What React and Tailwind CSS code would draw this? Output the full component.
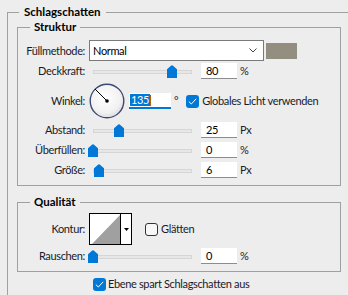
import React from "react";

function Slider({ pct }) {
  return (
    <div className="relative w-[110px] h-[20px] shrink-0 ml-[3px]">
      <div className="absolute left-[5px] top-[9px] w-[99px] h-[4px] bg-[#e7e7e7] border border-[#d6d6d6]" />
      <svg
        className="absolute top-[4px]"
        style={{ left: Math.round(pct * 99) }}
        width="10"
        height="13"
        viewBox="0 0 10 13"
      >
        <path d="M4.3 0.6 Q5 0 5.7 0.6 L10 4.2 V13 H0 V4.2 Z" fill="#0078d7" />
      </svg>
    </div>
  );
}

function Label({ children }) {
  return <div className="w-[67px] shrink-0 text-right">{children}</div>;
}

function NumInput({ value }) {
  return (
    <div className="ml-[3px] w-[36px] h-[16px] bg-white border-b border-[#8c8c8c] pl-[5px] flex items-center leading-[14px] text-black">
      {value}
    </div>
  );
}

function CheckOn() {
  return (
    <div className="w-[13px] h-[13px] rounded-[3px] bg-[#0078d7] flex items-center justify-center shrink-0">
      <svg width="9" height="7" viewBox="0 0 9 7">
        <path d="M0.8 3.6 L3.3 6 L8.2 0.8" fill="none" stroke="#ffffff" strokeWidth="1" />
      </svg>
    </div>
  );
}

function SliderRow({ label, pct, value, unit }) {
  return (
    <div className="flex items-center h-[20px]">
      <Label>{label}</Label>
      <Slider pct={pct} />
      <NumInput value={value} />
      <span className="ml-[3px]">{unit}</span>
    </div>
  );
}

export default function App() {
  return (
    <div className="w-[348px] h-[295px] overflow-hidden bg-[#ededed] pl-[7px] pt-[4px] text-[11px] leading-[16px] tracking-[-0.35px] text-[#1a1a2a] font-['Lato',sans-serif]">
      <fieldset className="border-l border-t border-[#a0a0a0] h-[400px]">
        <legend className="ml-[11px] px-[5px] font-bold text-black tracking-normal text-[11.5px]">Schlagschatten</legend>

        <fieldset className="mt-[-1px] ml-[9px] mr-[7px] border border-[#a0a0a0] pt-[5px] pb-[5px]">
          <legend className="ml-[12px] px-[4px] font-bold text-black tracking-normal text-[11.5px]">Struktur</legend>

          <div className="flex items-center h-[21px]">
            <Label>Füllmethode:</Label>
            <div className="ml-[4px] w-[175px] h-[21px] bg-white border border-[#7a7a7a] flex items-center justify-between pl-[3px] pr-[6px] text-black">
              <span>Normal</span>
              <svg width="8" height="5" viewBox="0 0 8 5">
                <path d="M0.5 0.5 L4 4 L7.5 0.5" fill="none" stroke="#444" strokeWidth="1" />
              </svg>
            </div>
            <div className="ml-[2px] w-[31px] h-[16px] bg-[#928f80]" />
          </div>

          <SliderRow label="Deckkraft:" pct={0.8} value="80" unit="%" />

          <div className="flex items-center h-[38px] mt-[1px]">
            <Label>Winkel:</Label>
            <svg className="ml-[4px] shrink-0" width="36" height="36" viewBox="0 0 36 36">
              <defs>
                <radialGradient id="dial" cx="45%" cy="40%" r="65%">
                  <stop offset="0" stopColor="#ffffff" />
                  <stop offset="0.7" stopColor="#f1f1f1" />
                  <stop offset="1" stopColor="#d6d6d6" />
                </radialGradient>
              </defs>
              <circle cx="18" cy="18" r="16.8" fill="url(#dial)" stroke="#3c4a74" strokeWidth="1.4" />
              <line x1="18" y1="18" x2="6" y2="6" stroke="#000" strokeWidth="1" />
              <circle cx="18" cy="18" r="1.8" fill="#000" />
            </svg>
            <div className="ml-[4px] w-[42px] h-[16px] bg-white border-b-2 border-[#0078d7] pl-[1px] flex items-center">
              <span className="bg-[#0078d7] text-white leading-[12px] px-[1px]">135</span>
              <span className="w-px h-[11px] bg-[#b0600a]" />
            </div>
            <span className="ml-[3px]">°</span>
            <div className="ml-[8px]"><CheckOn /></div>
            <span className="ml-[3px] whitespace-nowrap">Globales Licht verwenden</span>
          </div>

          <SliderRow label="Abstand:" pct={0.26} value="25" unit="Px" />
          <SliderRow label="Überfüllen:" pct={0} value="0" unit="%" />
          <SliderRow label="Größe:" pct={0.06} value="6" unit="Px" />
        </fieldset>

        <fieldset className="mt-[8px] ml-[9px] mr-[7px] border border-[#a0a0a0] pt-[3px] pb-[5px]">
          <legend className="ml-[12px] px-[4px] font-bold text-black tracking-normal text-[11.5px]">Qualität</legend>

          <div className="flex items-center h-[32px]">
            <Label>Kontur:</Label>
            <div className="ml-[4px] flex w-[43px] h-[32px] border border-black bg-white shrink-0">
              <div className="w-[30px] h-full pl-[2px] pt-[1px]">
                <svg width="28" height="29" viewBox="0 0 28 29">
                  <polygon points="0,29 28,0 28,29" fill="#a0a0a0" />
                </svg>
              </div>
              <div className="w-px bg-black" />
              <div className="flex-1 flex items-center justify-center">
                <svg width="5" height="3" viewBox="0 0 5 3">
                  <polygon points="0,0 5,0 2.5,3" fill="#000" />
                </svg>
              </div>
            </div>
            <div className="ml-[13px] w-[13px] h-[13px] rounded-[3px] border border-[#333] bg-[#f7f7f7] shrink-0" />
            <span className="ml-[3px]">Glätten</span>
          </div>

          <div className="mt-[1px]">
            <SliderRow label="Rauschen:" pct={0} value="0" unit="%" />
          </div>
        </fieldset>

        <div className="flex items-center h-[20px] mt-[2px] ml-[85px]">
          <CheckOn />
          <span className="ml-[2px]">Ebene spart Schlagschatten aus</span>
        </div>
      </fieldset>
    </div>
  );
}
